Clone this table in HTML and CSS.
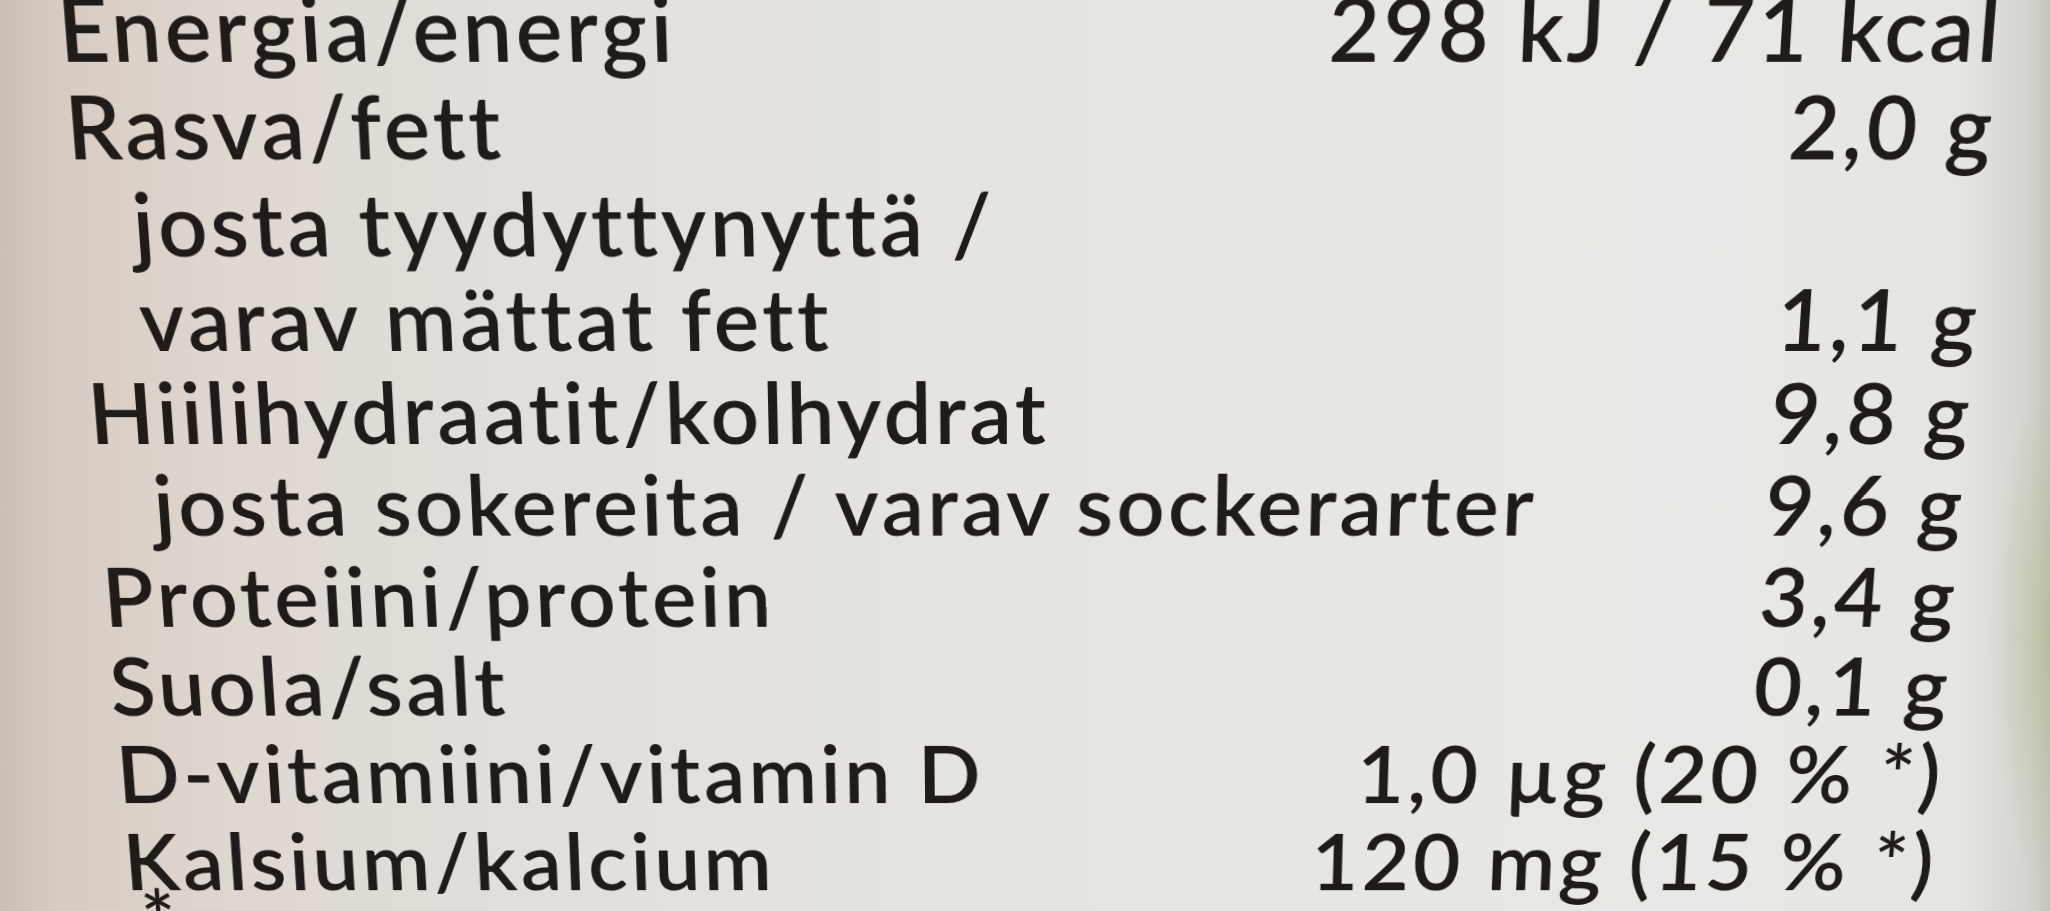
FILE: index.html
```html
<!DOCTYPE html>
<html lang="fi">
<head>
<meta charset="utf-8">
<title>Ravintosisältö / Näringsvärde</title>
<link rel="stylesheet" href="styles.css">
</head>
<body>
<main class="label">
  <div class="list">
    <div class="row"><span class="name">Energia/energi</span><span class="val">298 kJ / 71 kcal</span></div>
    <div class="row"><span class="name">Rasva/fett</span><span class="val">2,0 g</span></div>
    <div class="row sub"><span class="name">josta tyydyttynyttä /</span></div>
    <div class="row sub"><span class="name">varav mättat fett</span><span class="val">1,1 g</span></div>
    <div class="row"><span class="name">Hiilihydraatit/kolhydrat</span><span class="val">9,8 g</span></div>
    <div class="row sub"><span class="name">josta sokereita / varav sockerarter</span><span class="val">9,6 g</span></div>
    <div class="row"><span class="name">Proteiini/protein</span><span class="val">3,4 g</span></div>
    <div class="row"><span class="name">Suola/salt</span><span class="val">0,1 g</span></div>
    <div class="row"><span class="name">D-vitamiini/vitamin D</span><span class="val">1,0 µg (20 % *)</span></div>
    <div class="row"><span class="name">Kalsium/kalcium</span><span class="val">120 mg (15 % *)</span></div>
    <div class="row foot"><span class="name"><span class="star">*</span> % päivittäisen saannin vertailuarvosta</span></div>
  </div>
</main>
</body>
</html>
```

FILE: styles.css
```css
html, body {
  margin: 0;
  padding: 0;
  overflow: hidden;
}

body {
  width: 2050px;
  height: 911px;
  background:
    radial-gradient(ellipse 60px 260px at 100% 70%, rgba(170, 176, 120, 0.45), rgba(170, 176, 120, 0) 100%),
    linear-gradient(90deg, #cdbfb5 0px, #d7ccc3 60px, #dfd8d1 240px, #e3e0dc 600px, #e6e5e2 1100px, #e8e8e6 1700px, #e5e5e2 1960px, #d4d4cf 2030px, #c4c6bc 2050px);
  font-family: Lato, "Open Sans", sans-serif;
  color: #1f1b19;
}

.label {
  height: 911px;
  overflow: visible;
  box-sizing: border-box;
  padding: 0 80px 0 91px;
  transform: perspective(1500px) rotateX(-7.2deg);
  transform-origin: 50% 50%;
}

.list {
  display: flex;
  flex-direction: column;
  margin-top: -8px;
}

.row {
  display: flex;
  justify-content: space-between;
  align-items: baseline;
  height: 93.3px;
  line-height: 93.3px;
  font-size: 85px;
  font-weight: 600;
  letter-spacing: 0.04em;
  white-space: nowrap;
}

.row.sub .name {
  padding-left: 58px;
}

.row.foot {
  padding-left: 14px;
}

.star {
  line-height: 0;
  vertical-align: 0.36em;
}
```
